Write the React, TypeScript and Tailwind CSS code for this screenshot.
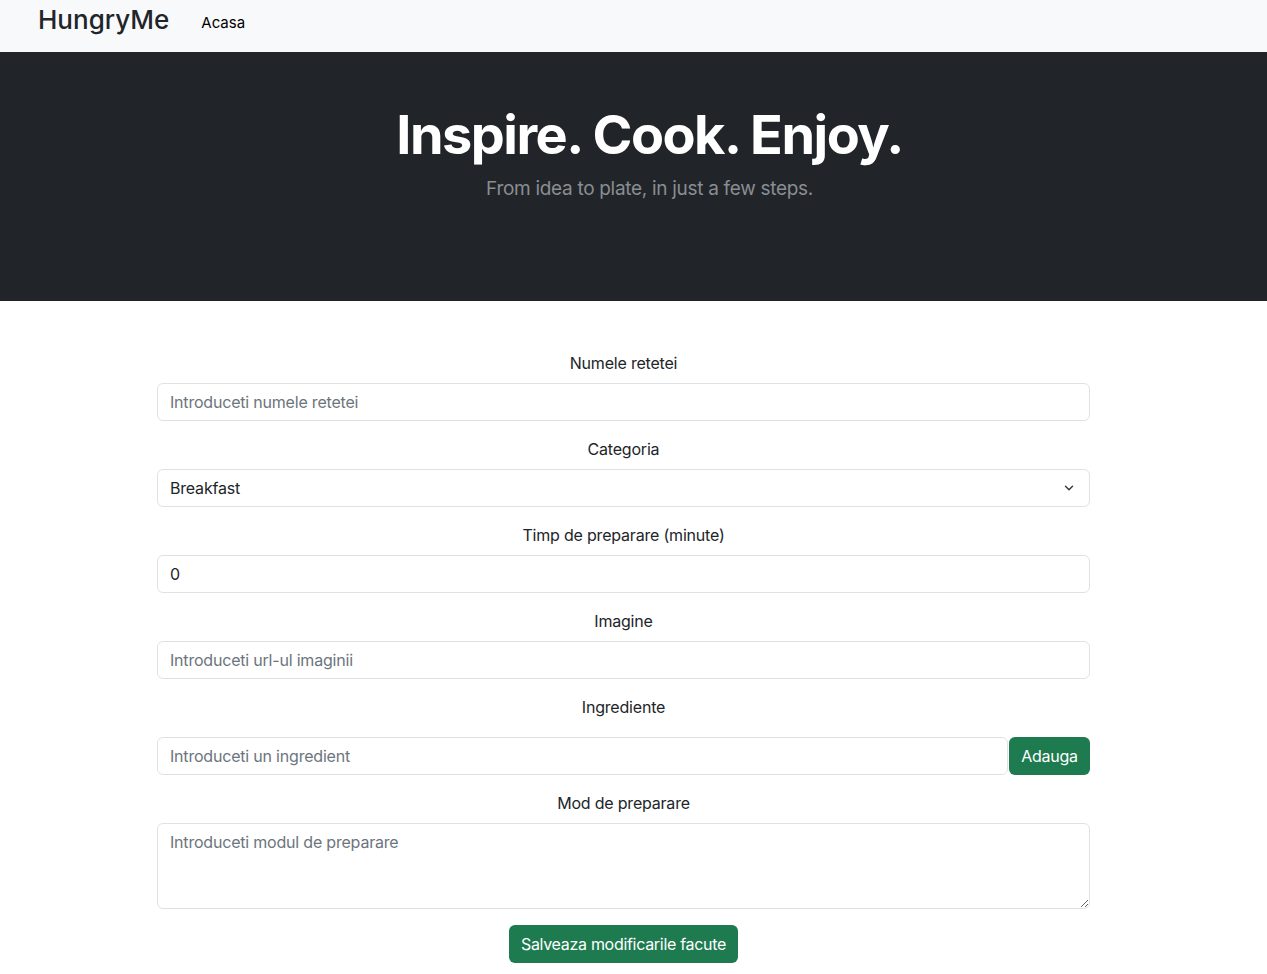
import { ChevronDown } from "lucide-react";

const font = { fontFamily: "Inter, 'Noto Sans', sans-serif" };

function Label({ children }: { children: React.ReactNode }) {
  return (
    <label className="block text-center text-[16px] leading-[24px] tracking-[-0.2px] text-[#212529] mb-2">
      {children}
    </label>
  );
}

const inputCls =
  "block w-full h-[38px] px-3 text-[16px] tracking-[-0.2px] text-[#212529] placeholder:text-[#6c757d] bg-white border border-[#dee2e6] rounded-[6px] outline-none";

export default function App() {
  return (
    <div style={font} className="min-h-screen bg-white text-[#212529]">
      <nav className="h-[52px] bg-[#f8f9fa] flex items-center px-[38px]">
        <span className="text-[26px] leading-none font-medium text-[#212529] -mt-[12px]">HungryMe</span>
        <span className="ml-[32px] text-[15px] text-black -mt-[6px]">Acasa</span>
      </nav>

      <header className="h-[249px] bg-[#212529] flex flex-col items-center pt-[50px] pl-[32px]">
        <h1 className="text-[54px] leading-[66px] font-bold text-white tracking-[-1.5px]">Inspire. Cook. Enjoy.</h1>
        <p className="mt-[7px] text-[19px] leading-[28px] tracking-[-0.3px] text-[#8a8d91]">
          From idea to plate, in just a few steps.
        </p>
      </header>

      <form className="w-[933px] ml-[157px] pt-[50px]">
        <div className="mb-4">
          <Label>Numele retetei</Label>
          <input className={inputCls} placeholder="Introduceti numele retetei" />
        </div>
        <div className="mb-4">
          <Label>Categoria</Label>
          <div className="relative">
            <select className={inputCls + " appearance-none"} defaultValue="Breakfast">
              <option>Breakfast</option>
              <option>Lunch</option>
              <option>Dinner</option>
            </select>
            <ChevronDown
              className="absolute right-[14px] top-[12px] w-[14px] h-[14px] text-[#343a40] pointer-events-none"
              strokeWidth={2.5}
            />
          </div>
        </div>
        <div className="mb-4">
          <Label>Timp de preparare (minute)</Label>
          <input className={inputCls} type="number" defaultValue={0} />
        </div>
        <div className="mb-4">
          <Label>Imagine</Label>
          <input className={inputCls} placeholder="Introduceti url-ul imaginii" />
        </div>
        <div className="mb-4">
          <Label>Ingrediente</Label>
          <div className="flex gap-[1px] mt-[18px]">
            <input className={inputCls + " flex-1"} placeholder="Introduceti un ingredient" />
            <button
              type="button"
              className="h-[38px] w-[81px] shrink-0 rounded-[6px] bg-[#1e7b4f] text-white text-[16px] tracking-[-0.3px]"
            >
              Adauga
            </button>
          </div>
        </div>
        <div className="mb-4">
          <Label>Mod de preparare</Label>
          <textarea
            rows={3}
            className="block w-full h-[86px] px-3 py-[6px] text-[16px] leading-[24px] tracking-[-0.2px] text-[#212529] placeholder:text-[#6c757d] border border-[#dee2e6] rounded-[6px] outline-none"
            placeholder="Introduceti modul de preparare"
          />
        </div>
        <div className="flex justify-center">
          <button
            type="button"
            className="h-[38px] w-[229px] rounded-[6px] bg-[#1e7b4f] text-white text-[16px] tracking-[-0.3px]"
          >
            Salveaza modificarile facute
          </button>
        </div>
      </form>
    </div>
  );
}
